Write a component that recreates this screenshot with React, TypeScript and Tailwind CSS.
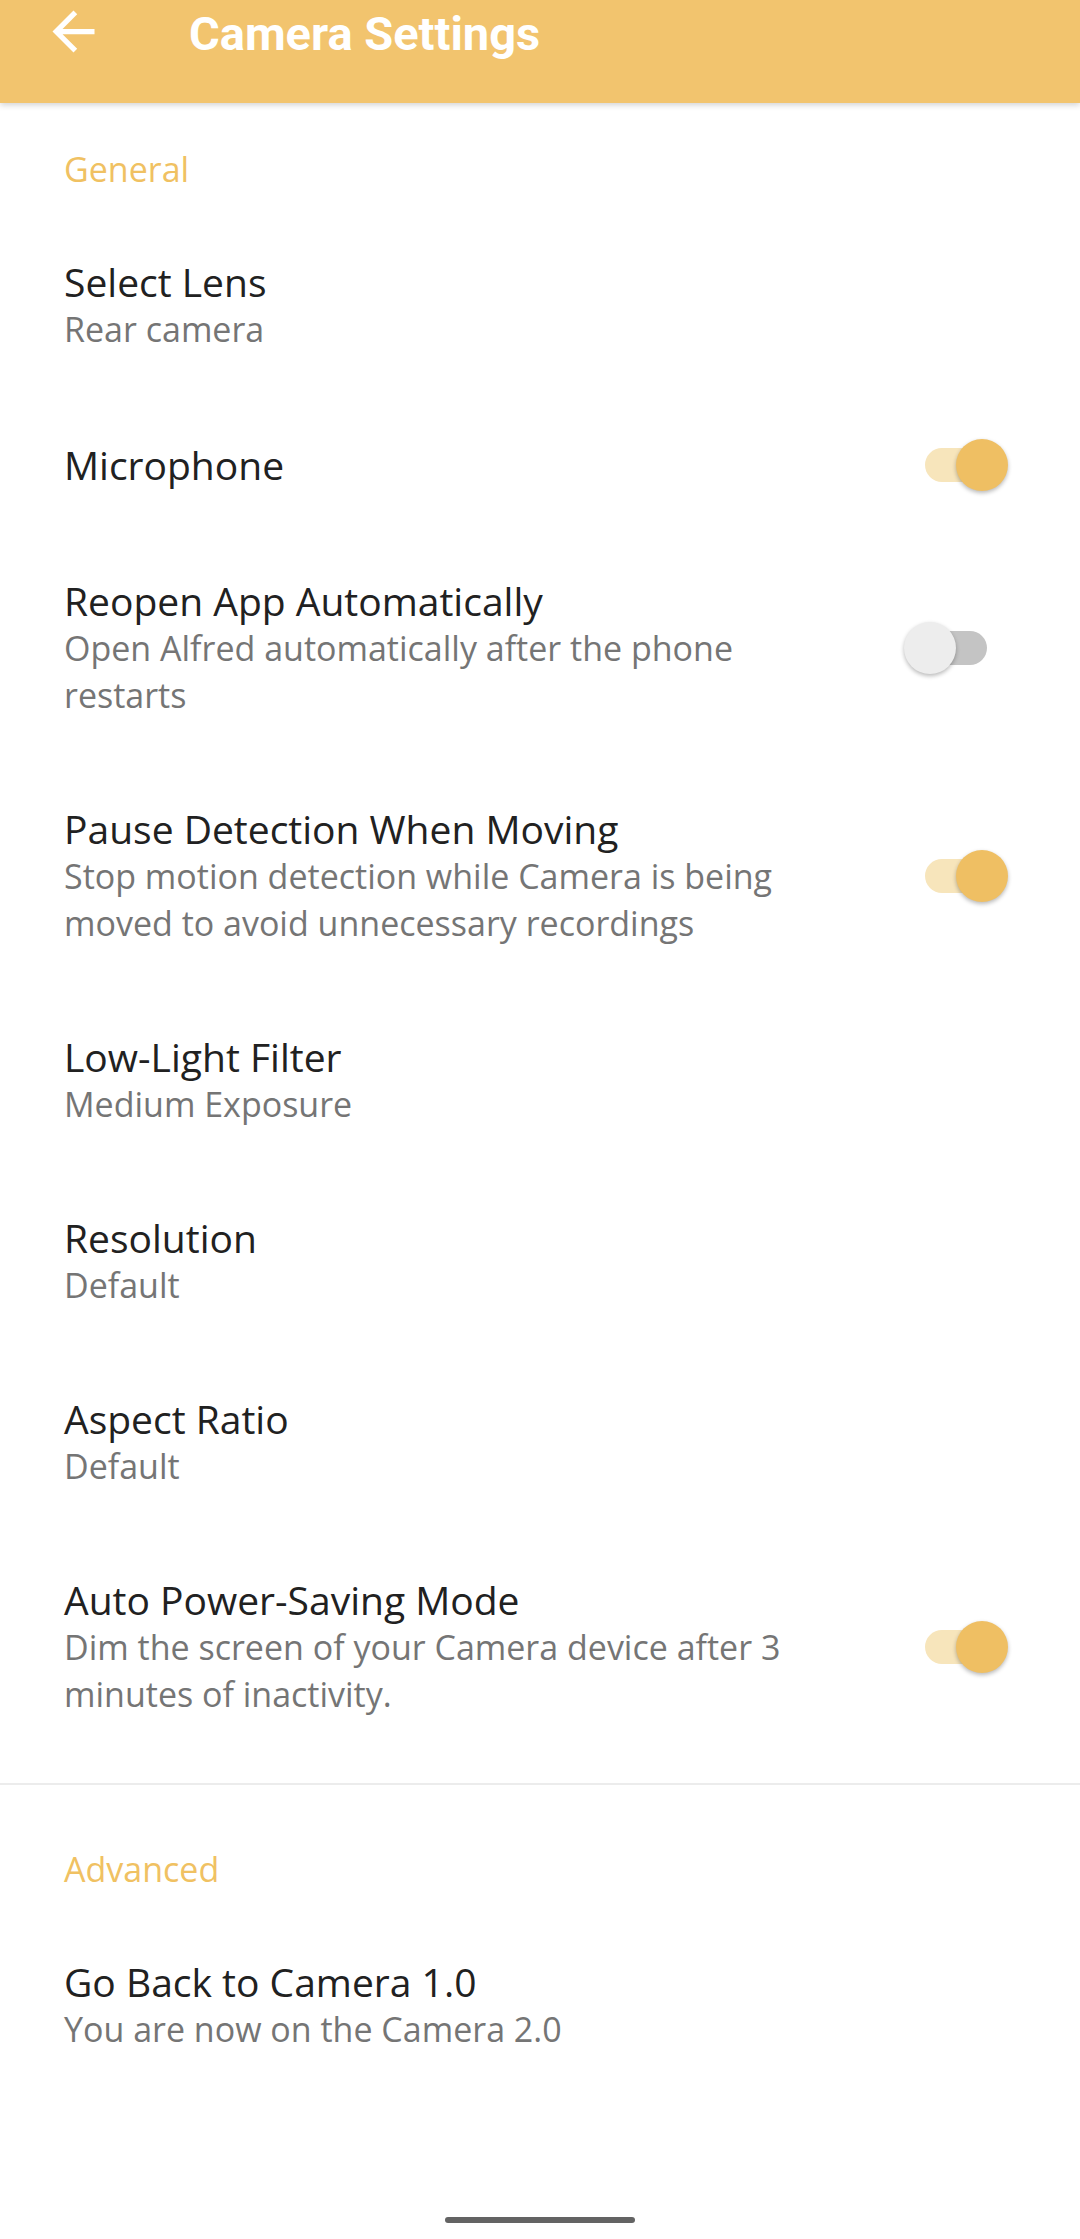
import React from "react";

type Item = {
  title: string;
  sub?: string;
  toggle?: "on" | "off";
};

const general: Item[] = [
  { title: "Select Lens", sub: "Rear camera" },
  { title: "Microphone", toggle: "on" },
  {
    title: "Reopen App Automatically",
    sub: "Open Alfred automatically after the phone restarts",
    toggle: "off",
  },
  {
    title: "Pause Detection When Moving",
    sub: "Stop motion detection while Camera is being moved to avoid unnecessary recordings",
    toggle: "on",
  },
  { title: "Low-Light Filter", sub: "Medium Exposure" },
  { title: "Resolution", sub: "Default" },
  { title: "Aspect Ratio", sub: "Default" },
  {
    title: "Auto Power-Saving Mode",
    sub: "Dim the screen of your Camera device after 3 minutes of inactivity.",
    toggle: "on",
  },
];

function Switch({ on }: { on: boolean }) {
  return (
    <div className="relative w-[104px] h-[52px] shrink-0">
      <div
        className={
          on
            ? "absolute left-[21px] top-[9px] w-[62px] h-[34px] rounded-full bg-[#f7e5bb]"
            : "absolute left-[21px] top-[9px] w-[62px] h-[34px] rounded-full bg-[#c4c4c4]"
        }
      />
      {on ? (
        <div className="absolute right-0 top-0 w-[52px] h-[52px] rounded-full bg-[#efbf63] shadow-[0_2px_4px_rgba(0,0,0,0.28)]" />
      ) : (
        <div className="absolute left-0 top-0 w-[52px] h-[52px] rounded-full bg-[#ededed] shadow-[0_2px_4px_rgba(0,0,0,0.28)]" />
      )}
    </div>
  );
}

function Row({ item }: { item: Item }) {
  return (
    <div className="flex items-center pl-[64px] pr-[72px] py-[43px]">
      <div className="w-[756px] shrink-0">
        <div className="text-[39px] leading-[48px] text-[#212121]">{item.title}</div>
        {item.sub && (
          <div className="text-[34px] leading-[47px] text-[#757575]">{item.sub}</div>
        )}
      </div>
      <div className="flex-1 flex justify-end">
        {item.toggle && <Switch on={item.toggle === "on"} />}
      </div>
    </div>
  );
}

function Category({ label, top }: { label: string; top: string }) {
  return (
    <div
      className={
        top === "first"
          ? "pl-[64px] pt-[43px] pb-[22px] text-[34px] leading-[47px] text-[#f0c162]"
          : "pl-[64px] pt-[61px] pb-[22px] text-[34px] leading-[47px] text-[#f0c162]"
      }
    >
      {label}
    </div>
  );
}

export default function App() {
  return (
    <div
      className="w-[1080px] h-[2239px] bg-white flex flex-col overflow-hidden"
      style={{ fontFamily: '"Open Sans", "Noto Sans", sans-serif' }}
    >
      <header className="relative z-10 h-[103px] bg-[#f2c46e] shadow-[0_2px_6px_rgba(0,0,0,0.18)] flex items-start pl-[42px] shrink-0">
        <div className="h-[62px] flex items-center">
          <svg width="63" height="63" viewBox="0 0 24 24" fill="#ffffff">
            <path d="M20 11H7.83l5.59-5.59L12 4l-8 8 8 8 1.41-1.41L7.83 13H20v-2z" />
          </svg>
        </div>
        <h1
          className="ml-[84px] pt-[3px] text-[47px] leading-[62px] font-bold text-white"
          style={{ fontFamily: "Roboto, 'Liberation Sans', sans-serif" }}
        >
          Camera Settings
        </h1>
      </header>

      <Category label="General" top="first" />
      {general.map((it) => (
        <Row key={it.title} item={it} />
      ))}

      <div className="mt-[22px] h-[2px] bg-[#ececec]" />

      <Category label="Advanced" top="second" />
      <Row item={{ title: "Go Back to Camera 1.0", sub: "You are now on the Camera 2.0" }} />

      <div className="flex-1" />
      <div className="flex justify-center pb-[16px]">
        <div className="w-[190px] h-[6px] rounded-full bg-[#636363]" />
      </div>
    </div>
  );
}
